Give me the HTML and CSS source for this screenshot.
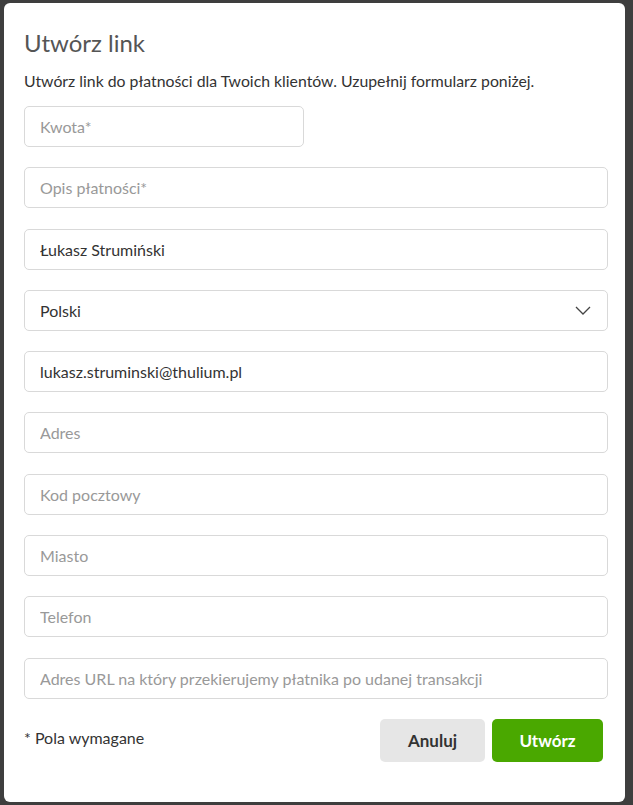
FILE: index.html
```html
<!DOCTYPE html>
<html lang="pl">
<head>
<meta charset="utf-8">
<title>Utwórz link</title>
<link rel="stylesheet" href="styles.css">
</head>
<body>
<div class="modal">
  <h1 class="title">Utwórz link</h1>
  <p class="lead">Utwórz link do płatności dla Twoich klientów. Uzupełnij formularz poniżej.</p>
  <form class="form">
    <input class="field field-short" type="text" placeholder="Kwota*">
    <input class="field" type="text" placeholder="Opis płatności*">
    <input class="field" type="text" value="Łukasz Strumiński">
    <div class="select">
      <span>Polski</span>
      <svg class="chev" width="16" height="9" viewBox="0 0 16 9"><path d="M1 1l7 7 7-7" fill="none" stroke="#444" stroke-width="1.3"/></svg>
    </div>
    <input class="field" type="text" value="lukasz.struminski@thulium.pl">
    <input class="field" type="text" placeholder="Adres">
    <input class="field" type="text" placeholder="Kod pocztowy">
    <input class="field" type="text" placeholder="Miasto">
    <input class="field" type="text" placeholder="Telefon">
    <input class="field" type="text" placeholder="Adres URL na który przekierujemy płatnika po udanej transakcji">
  </form>
  <div class="footer">
    <span class="req">* Pola wymagane</span>
    <div class="actions">
      <button class="btn btn-cancel" type="button">Anuluj</button>
      <button class="btn btn-ok" type="button">Utwórz</button>
    </div>
  </div>
</div>
</body>
</html>
```
FILE: styles.css
```css
* { box-sizing: border-box; }
html, body { margin: 0; height: 100%; }
body {
  background: #3e3e3e;
  padding: 3px 8px 3px 4px;
  font-family: Lato, "Open Sans", sans-serif;
  color: #333;
}
.modal {
  background: #fff;
  border-radius: 6px;
  height: 799px;
  width: 621px;
  padding: 25px 17px 0 20px;
  display: flex;
  flex-direction: column;
}
.title {
  margin: 0;
  font-size: 24px;
  font-weight: 400;
  line-height: 30px;
  color: #555;
}
.lead {
  margin: 13px 0 0 0;
  font-size: 15.8px;
  line-height: 20px;
  color: #333;
}
.form {
  margin-top: 15px;
  display: flex;
  flex-direction: column;
  gap: 20.3px;
}
.field, .select {
  display: block;
  width: 100%;
  height: 41px;
  border: 1px solid #d9d9d9;
  border-radius: 5px;
  padding: 0 15px;
  font-family: Lato, "Open Sans", sans-serif;
  font-size: 16px;
  color: #333;
  background: #fff;
  outline: none;
}
.field::placeholder { color: #999; }
.field-short { width: 280px; }
.select {
  display: flex;
  align-items: center;
  justify-content: space-between;
  padding-right: 16px;
}
.footer {
  margin-top: 20px;
  display: flex;
  align-items: center;
  justify-content: space-between;
  padding-right: 5px;
}
.req { font-size: 16px; line-height: 20px; color: #333; margin-bottom: 4px; }
.actions { display: flex; gap: 7px; }
.btn {
  height: 43px;
  border: 0;
  border-radius: 5px;
  font-family: Lato, "Open Sans", sans-serif;
  font-weight: 700;
  font-size: 17px;
  cursor: pointer;
}
.btn-cancel { width: 105px; background: #e6e6e6; color: #333; }
.btn-ok { width: 111px; background: #4aa800; color: #fff; }
```
